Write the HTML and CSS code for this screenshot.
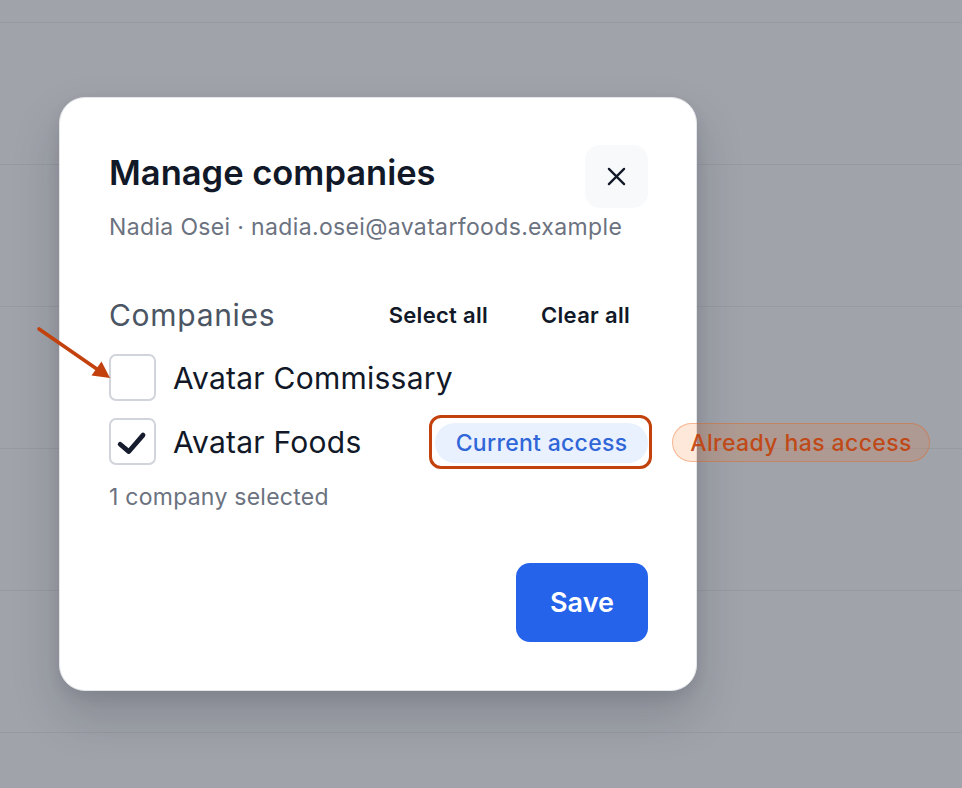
FILE: index.html
```html
<!DOCTYPE html>
<html lang="en">
<head>
<meta charset="utf-8">
<title>Manage companies</title>
<link rel="stylesheet" href="styles.css">
</head>
<body>
  <div class="backdrop">
    <div class="bg-row bg-row-first"></div>
    <div class="bg-row"></div>
    <div class="bg-row"></div>
    <div class="bg-row"></div>
    <div class="bg-row"></div>
    <div class="bg-row"></div>
  </div>

  <div class="modal" role="dialog" aria-labelledby="modal-title">
    <div class="modal-header">
      <div class="modal-heading">
        <h2 id="modal-title" class="modal-title">Manage companies</h2>
        <p class="modal-subtitle">Nadia Osei · nadia.osei@avatarfoods.example</p>
      </div>
      <button class="close-btn" aria-label="Close">
        <svg viewBox="0 0 20 20" width="20" height="20" aria-hidden="true">
          <path d="M2 2 L18 18 M18 2 L2 18" stroke="#111827" stroke-width="2.4" stroke-linecap="round" fill="none"/>
        </svg>
      </button>
    </div>

    <div class="section-head">
      <span class="section-label">Companies</span>
      <div class="section-actions">
        <button class="text-btn">Select all</button>
        <button class="text-btn">Clear all</button>
      </div>
    </div>

    <ul class="company-list">
      <li class="company-row">
        <span class="checkbox"></span>
        <span class="company-name">Avatar Commissary</span>
      </li>
      <li class="company-row">
        <span class="checkbox">
          <svg viewBox="0 0 47 47" width="45" height="45" aria-hidden="true">
            <path d="M10 26.5 L19.5 34.5 L35 16.5" stroke="#161c2d" stroke-width="5.2" stroke-linecap="round" stroke-linejoin="round" fill="none"/>
          </svg>
        </span>
        <span class="company-name">Avatar Foods</span>
        <span class="highlight">
          <span class="pill pill-current">Current access</span>
        </span>
      </li>
    </ul>

    <p class="selected-count">1 company selected</p>

    <div class="modal-footer">
      <button class="save-btn">Save</button>
    </div>
  </div>

  <!-- callout marks laid over the dialog -->
  <svg class="callout-arrow" viewBox="0 0 962 788" aria-hidden="true">
    <line x1="39" y1="329" x2="99" y2="370.5" stroke="#c2410c" stroke-width="3.6" stroke-linecap="round"/>
    <polygon points="110,378 91.5,375.5 101.5,361.5" fill="#c2410c"/>
  </svg>
  <span class="pill pill-note">Already has access</span>
</body>
</html>
```

FILE: styles.css
```css
* {
  box-sizing: border-box;
}

html, body {
  margin: 0;
  padding: 0;
  height: 100%;
}

body {
  font-family: Inter, "Noto Sans", "Liberation Sans", sans-serif;
  background: #a0a3aa;
  overflow: hidden;
  position: relative;
  -webkit-font-smoothing: antialiased;
}

/* dimmed page rows behind the dialog */
.backdrop {
  display: flex;
  flex-direction: column;
}

.bg-row {
  height: 142px;
  border-bottom: 1px solid #979aa1;
}

.bg-row-first {
  height: 23px;
}

/* dialog */
.modal {
  position: absolute;
  left: 59px;
  top: 97px;
  width: 638px;
  height: 594px;
  background: #ffffff;
  border: 1px solid #e4e6ea;
  border-radius: 26px;
  padding: 47px 48px 48px 49px;
  box-shadow: 0 24px 48px rgba(17, 24, 39, 0.18), 0 6px 14px rgba(17, 24, 39, 0.08);
  display: flex;
  flex-direction: column;
}

.modal-header {
  display: flex;
  justify-content: space-between;
  align-items: flex-start;
}

.modal-heading {
  flex: 1;
  min-width: 0;
}

.modal-title {
  margin: 8px 0 0;
  font-size: 34.5px;
  line-height: 40px;
  font-weight: 600;
  color: #111827;
  letter-spacing: 0;
}

.modal-subtitle {
  margin: 20px 0 0;
  font-size: 23px;
  line-height: 28px;
  color: #6b7280;
  letter-spacing: 0.35px;
  white-space: nowrap;
}

.close-btn {
  width: 63px;
  height: 63px;
  flex: none;
  border: none;
  border-radius: 15px;
  background: #f8f9fb;
  display: flex;
  align-items: center;
  justify-content: center;
  padding: 0;
  cursor: pointer;
}

.close-btn svg {
  width: 19px;
  height: 19px;
}

/* companies section */
.section-head {
  margin-top: 56px;
  height: 36px;
  display: flex;
  justify-content: space-between;
  align-items: center;
}

.section-label {
  font-size: 30px;
  line-height: 36px;
  color: #4b5563;
  letter-spacing: 0.7px;
}

.section-actions {
  display: flex;
  gap: 17px;
}

.text-btn {
  font-family: inherit;
  font-size: 22px;
  line-height: 26px;
  font-weight: 600;
  color: #111827;
  letter-spacing: 0.3px;
  background: none;
  border: none;
  padding: 5px 18px;
  cursor: pointer;
}

.company-list {
  list-style: none;
  margin: 21px 0 0;
  padding: 0;
  display: flex;
  flex-direction: column;
  gap: 17px;
}

.company-row {
  display: flex;
  align-items: center;
  height: 47px;
}

.checkbox {
  width: 47px;
  height: 47px;
  flex: none;
  border: 2px solid #d1d5db;
  border-radius: 7px;
  display: flex;
  align-items: center;
  justify-content: center;
}

.company-name {
  margin-left: 17px;
  font-size: 30px;
  color: #111827;
  letter-spacing: 0.25px;
}

/* highlight frame around the access badge */
.highlight {
  margin-left: auto;
  margin-right: -4px;
  border: 3px solid #c2410c;
  border-radius: 12px;
  padding: 5px 1px 3px 3px;
  display: flex;
}

.pill {
  display: inline-flex;
  align-items: center;
  justify-content: center;
  border-radius: 999px;
  font-size: 23px;
  font-weight: 500;
  white-space: nowrap;
}

.pill-current {
  width: 213px;
  height: 40px;
  background: #eaf1fe;
  color: #2f66d8;
  letter-spacing: 0.3px;
}

.selected-count {
  margin: 18px 0 0;
  font-size: 23px;
  line-height: 28px;
  color: #6b7280;
  letter-spacing: 0.25px;
}

.modal-footer {
  margin-top: auto;
  display: flex;
  justify-content: flex-end;
}

.save-btn {
  font-family: inherit;
  width: 132px;
  height: 79px;
  border: none;
  border-radius: 14px;
  background: #2563eb;
  color: #ffffff;
  font-size: 27px;
  font-weight: 600;
  cursor: pointer;
}

/* callout marks */
.callout-arrow {
  position: absolute;
  left: 0;
  top: 0;
  width: 962px;
  height: 788px;
  pointer-events: none;
}

.pill-note {
  position: absolute;
  left: 672px;
  top: 423px;
  width: 258px;
  height: 39px;
  background: rgba(249, 115, 22, 0.16);
  border: 1.5px solid rgba(234, 88, 12, 0.35);
  color: rgba(194, 65, 12, 0.92);
  letter-spacing: 0.4px;
}
```
